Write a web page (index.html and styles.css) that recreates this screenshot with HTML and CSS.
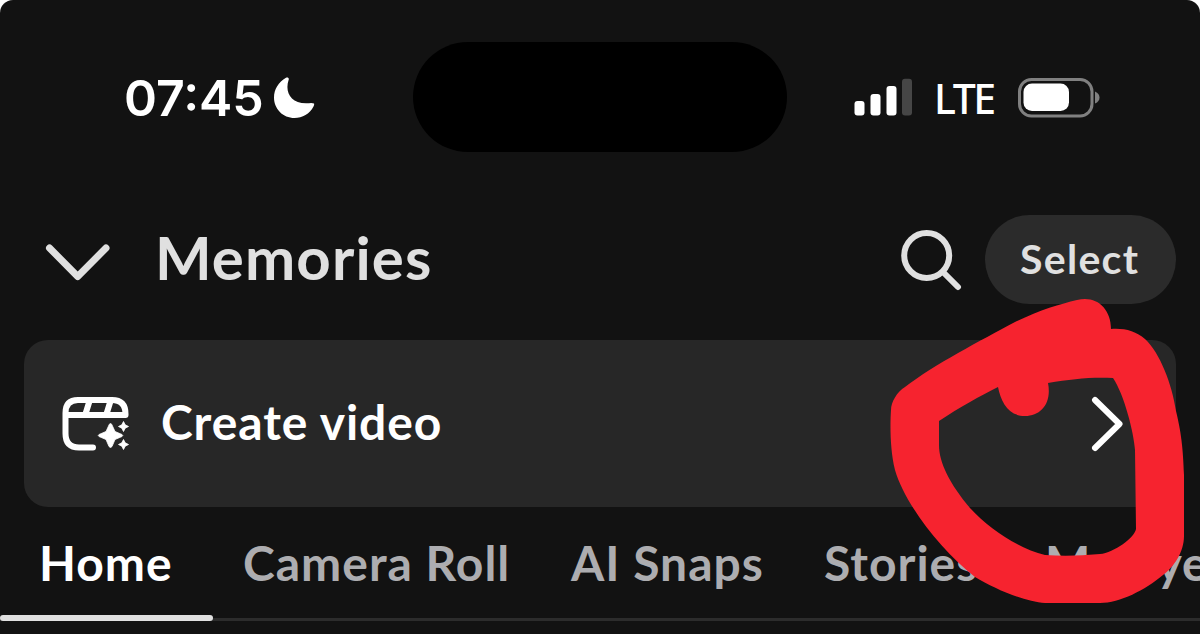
FILE: index.html
```html
<!DOCTYPE html>
<html lang="en">
<head>
<meta charset="utf-8">
<title>Memories</title>
<link rel="stylesheet" href="styles.css">
</head>
<body>
<div class="screen">
  <div class="status">
    <div class="clock">
      <span class="time">07:45</span>
      <svg class="moon" width="42" height="42" viewBox="0 0 42 42"><path d="M13 .8C14.500-.2 16.500.8 15.600 3C11.500 15 18 27.800 36 26.200Q39 25.400 41 26.600Q41.500 27.500 40.500 29.500C36.500 37 29.500 41 21.500 41C10 41 1 32 1 20.500C1 12.500 5.500 5 13 .8Z" fill="#fff"/></svg>
    </div>
    <div class="island"></div>
    <div class="signals">
      <svg width="58" height="38" viewBox="0 0 58 38"><g fill="#fff"><rect x=".5" y="23" width="10" height="14.500" rx="3"/><rect x="16.500" y="16" width="10" height="21.500" rx="3"/><rect x="32.500" y="8" width="10" height="29.500" rx="3"/></g><rect x="48" y="0.700" width="10" height="36.800" rx="3" fill="#464646"/></svg>
      <span class="lte">LTE</span>
      <svg class="battery" width="83" height="40" viewBox="0 0 83 40"><rect x="1.500" y="1.500" width="72.500" height="36.500" rx="12" fill="none" stroke="#808080" stroke-width="3"/><rect x="5.500" y="5.500" width="45.500" height="27.500" rx="8.500" fill="#fff"/><path d="M77 13.500q4.500 2 4.500 6t-4.500 6z" fill="#808080"/></svg>
    </div>
  </div>

  <div class="header">
    <svg class="down" width="66" height="40" viewBox="0 0 66 40"><path d="M4.500 5 32.700 33.500 61 5" fill="none" stroke="#e0e0e0" stroke-width="7" stroke-linecap="round" stroke-linejoin="round"/></svg>
    <h1 class="title">Memories</h1>
    <svg class="search" width="62" height="62" viewBox="0 0 62 62"><g fill="none" stroke="#e0e0e0" stroke-width="6"><circle cx="25.700" cy="26.500" r="22.500"/><path d="M42 43 57 58" stroke-linecap="round"/></g></svg>
    <div class="select"><span>Select</span></div>
  </div>

  <div class="card">
    <svg class="clip" width="68" height="56" viewBox="0 0 68 56"><g fill="none" stroke="#fff" stroke-width="6" stroke-linecap="round" stroke-linejoin="round"><path d="M32 51.500H18Q4.500 51.500 4.500 37.500V17Q4.500 4 17 4H51Q64.500 4 64.500 18V19H5"/><path d="M28.500 5 24.500 18M49.500 5 45.500 18" stroke-linecap="butt"/></g><path d="M49.500 27.500q1 0 1.500 1.500l3 6.500 7 3q1.500 1 0 2l-7 3-3 7q-1.500 2-3 0l-3-7-7-3q-1.500-1 0-2l7-3 3-6.500q.5-1.500 1.500-1.500zM62.500 25.500l1.700 3.300 3.300 1.700-3.300 1.700-1.700 3.300-1.700-3.300-3.300-1.700 3.300-1.700zM62.500 43.500l1.700 3.300 3.300 1.700-3.300 1.700-1.700 3.300-1.700-3.300-3.300-1.700 3.300-1.700z" fill="#fff" stroke="#fff" stroke-width=".8" stroke-linejoin="round"/></svg>
    <span class="create">Create video</span>
    <svg class="next" width="34" height="56" viewBox="0 0 34 56"><path d="M4 4 28.500 28 4 52" fill="none" stroke="#fff" stroke-width="6" stroke-linecap="round" stroke-linejoin="round"/></svg>
  </div>

  <div class="tabs">
    <span class="tab home">Home</span>
    <span class="tab roll">Camera Roll</span>
    <span class="tab snaps">AI Snaps</span>
    <span class="tab stories">Stories</span>
    <span class="tab eyes">My Eyes</span>
  </div>
  <div class="rail"><div class="active"></div></div>

  <svg class="marker" width="1200" height="634" viewBox="0 0 1200 634"><path fill="#f6232f" fill-rule="evenodd" d="M1077 300C1096 295 1111 308 1111 329C1124 328 1136 331 1145 339C1160 353 1172 384 1176 411C1181 432 1183 446 1184 475V536C1184 552 1174 567 1163 575C1145 590 1120 603 1100 603H1045C1025 602 995 589 975 577C940 550 904 502 895 470C890 450 890 425 891 410C891 402 897 392 905 387C935 364 980 341 1015 322C1040 310 1060 304 1077 300ZM939 421C960 407 980 396 998 387C1001 402 1008 416 1025 416C1041 416 1052 403 1048 383C1072 379 1090 377 1113 378C1124 394 1134 433 1135 450L1136 529C1135 537 1114 553 1100 554Q1070 557 1045 555C1020 549 990 530 970 508C950 484 939 463 939 445Z"/></svg>
</div>
</body>
</html>
```

FILE: styles.css
```css
* { box-sizing: border-box; }
body { margin: 0; background: #fff; }
svg { display: block; flex: none; }
.screen {
  position: relative;
  width: 1200px;
  height: 634px;
  overflow: hidden;
  background: #121212;
  border-radius: 13px 13px 0 0;
  font-family: Lato, "Open Sans", sans-serif;
  font-weight: 700;
  white-space: nowrap;
  display: flex;
  flex-direction: column;
}
.status {
  height: 152px;
  padding-top: 42px;
  display: grid;
  grid-template-columns: 413px 374px 413px;
}
.clock { display: flex; padding: 26px 0 0 124px; height: 110px; }
.time { width: 148px; font: 600 50px/60px Inter, sans-serif; color: #fff; }
.moon { margin-top: 9px; margin-left: 1px; }
.island { height: 110px; border-radius: 55px; background: #000; }
.signals { display: flex; padding: 36px 0 0 67px; }
.lte { width: 65px; margin-left: 22px; font: 500 41px/41px "Noto Sans", sans-serif; letter-spacing: -2.4px; color: #fff; }
.battery { margin-left: 19px; }
.header { height: 188px; padding: 63px 24px 0 45px; display: flex; }
.down { margin-top: 28px; }
.title { width: 300px; margin: 6px 0 0 44px; font-size: 60px; line-height: 72px; font-weight: 700; letter-spacing: 1.1px; color: #e0e0e0; }
.search { margin: 14px 0 0 446px; }
.select {
  width: 191px;
  height: 89px;
  margin-left: auto;
  border-radius: 45px;
  background: #2b2b2b;
  color: #e0e0e0;
  font-size: 41px;
  line-height: 87px;
  letter-spacing: 1.3px;
  padding-left: 35px;
}
.card {
  height: 167px;
  margin: 0 24px;
  padding: 0 51px 0 37px;
  border-radius: 24px;
  background: #272727;
  display: flex;
  align-items: center;
}
.create { margin: -3px 0 0 32px; font-size: 48px; line-height: 58px; letter-spacing: .9px; color: #fff; }
.next { margin-left: auto; }
.tabs { height: 108px; padding: 27px 0 0 39px; display: flex; font-size: 48px; line-height: 58px; letter-spacing: 1px; color: #adadb0; }
.tab { flex: none; }
.home { width: 204px; color: #fff; }
.roll { width: 328px; }
.snaps { width: 253px; }
.stories { width: 221px; }
.rail { height: 6px; background: linear-gradient(#121212 50%, #2c2c2c 50%); }
.active { width: 213px; height: 6px; border-radius: 3px; background: #e0e0e0; }
.marker { position: absolute; left: 0; top: 0; }
```
